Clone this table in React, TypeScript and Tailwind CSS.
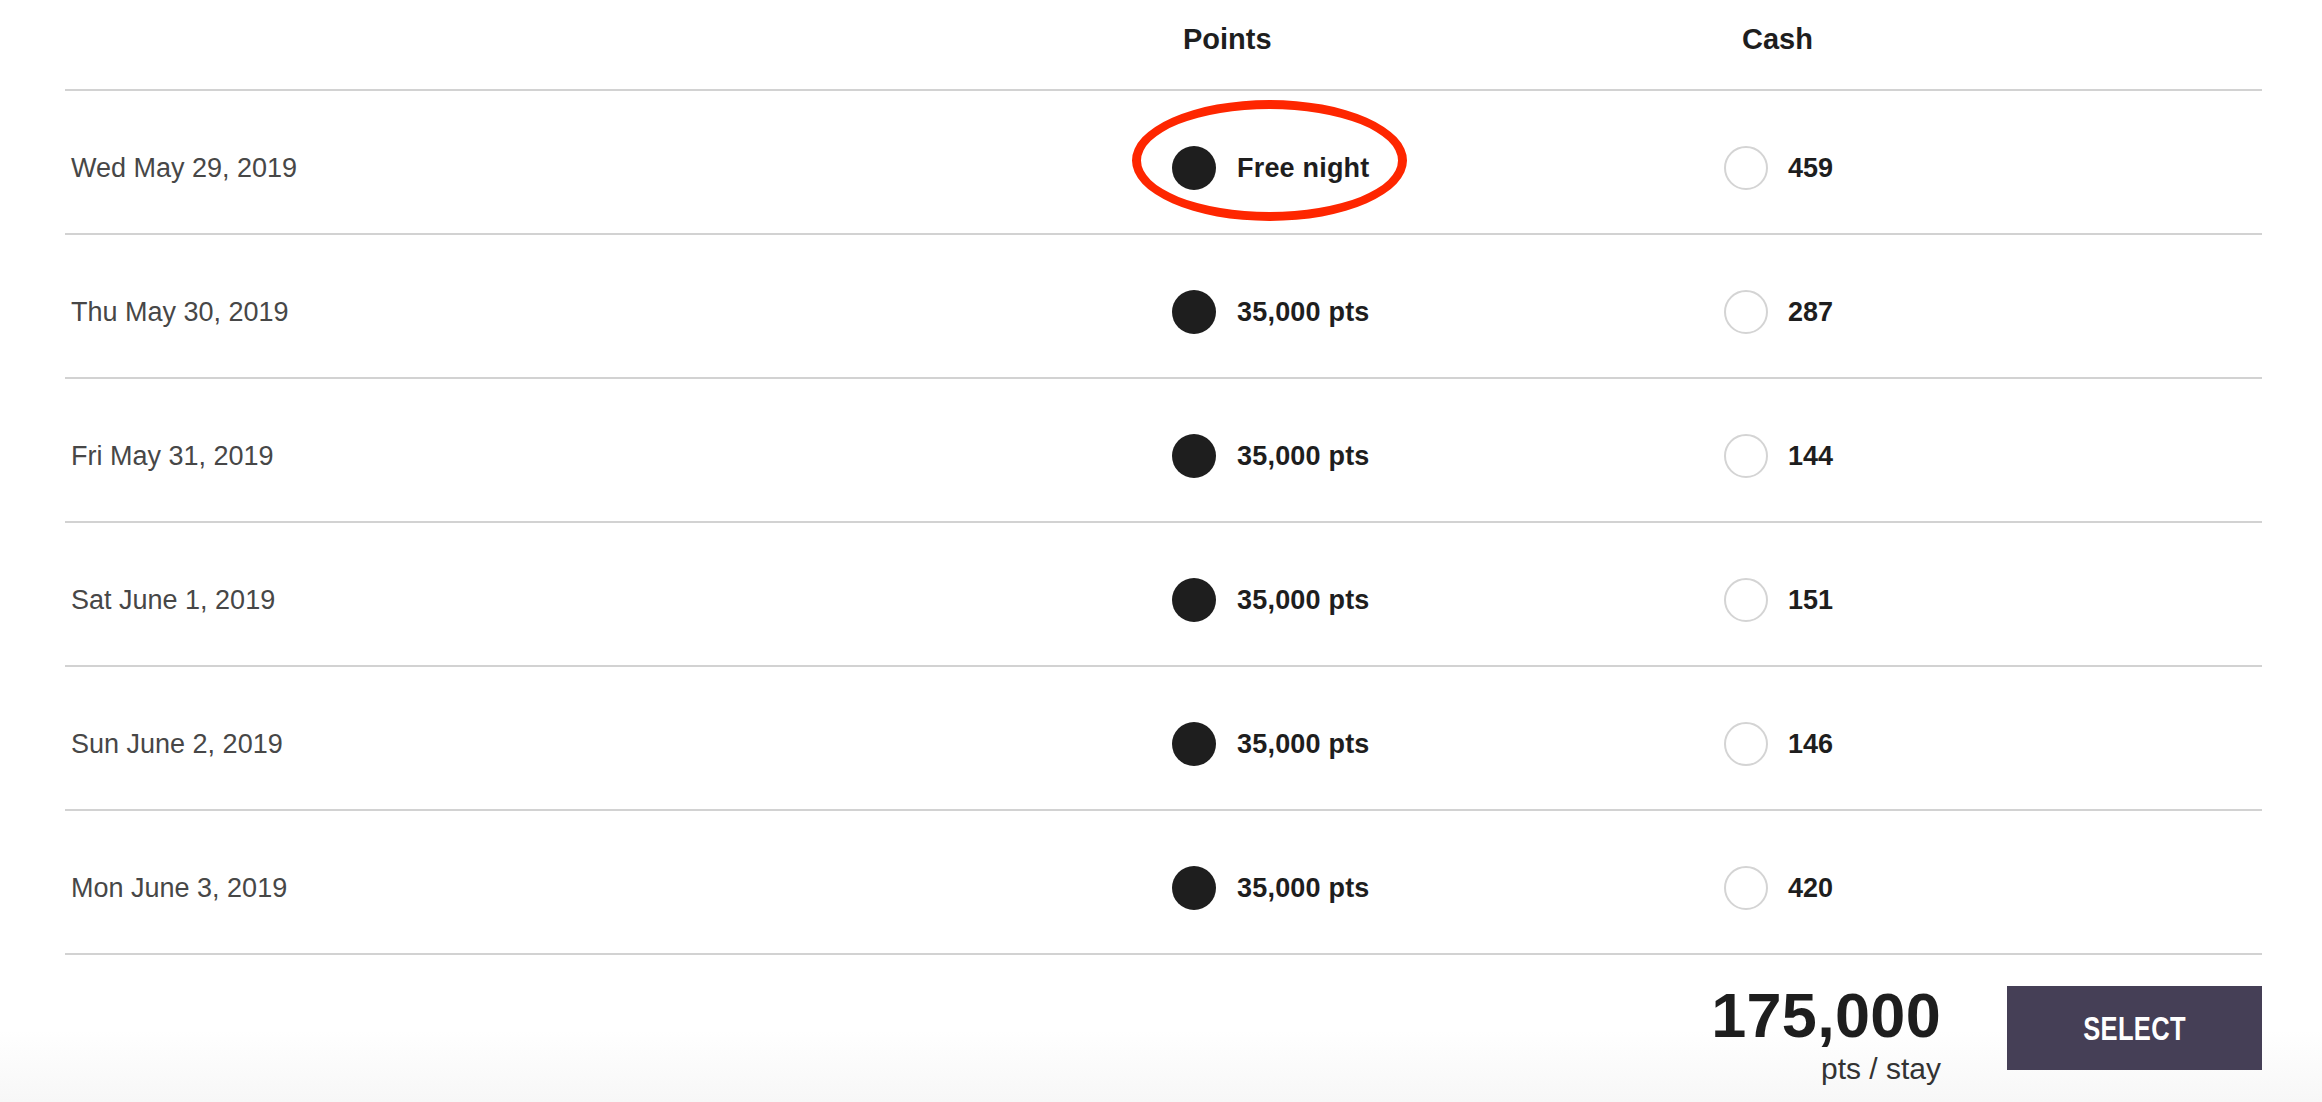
type Night = {
  date: string;
  points: string;
  cash: number;
  highlight?: boolean;
};

const nights: Night[] = [
  { date: "Wed May 29, 2019", points: "Free night", cash: 459, highlight: true },
  { date: "Thu May 30, 2019", points: "35,000 pts", cash: 287 },
  { date: "Fri May 31, 2019", points: "35,000 pts", cash: 144 },
  { date: "Sat June 1, 2019", points: "35,000 pts", cash: 151 },
  { date: "Sun June 2, 2019", points: "35,000 pts", cash: 146 },
  { date: "Mon June 3, 2019", points: "35,000 pts", cash: 420 },
];

function NightRow({ night }: { night: Night }) {
  return (
    <div className="grid h-[144px] grid-cols-[1107px_552px_1fr] items-center border-b-2 border-[#d2d2d2] pt-[12px]">
      <p className="pl-[6px] text-[27px] text-[#474747]">{night.date}</p>

      <div className="relative flex items-center gap-[21px]">
        <span className="h-[44px] w-[44px] shrink-0 rounded-full bg-[#1e1e1e]" />
        <span className="text-[27px] font-bold tracking-[0.2px] text-[#1e1e1e]">{night.points}</span>
        {night.highlight && (
          <span className="pointer-events-none absolute left-[-40px] top-[-46px] h-[121px] w-[275px] rounded-[50%] border-[9px] border-[#fe2600]" />
        )}
      </div>

      <div className="flex items-center gap-[20px]">
        <span className="h-[44px] w-[44px] shrink-0 rounded-full border-2 border-[#d4d4d4] bg-white" />
        <span className="text-[27px] font-bold text-[#1e1e1e]">{night.cash}</span>
      </div>
    </div>
  );
}

export default function App() {
  return (
    <div className="min-h-[1102px] bg-[linear-gradient(to_bottom,#ffffff_0px,#ffffff_1030px,#f7f7f7_1102px)] font-['Liberation_Sans',Arial,sans-serif]">
      <div className="ml-[65px] mr-[60px]">
        <div className="grid h-[91px] grid-cols-[1107px_552px_1fr] border-b-2 border-[#d2d2d2] pt-[18px]">
          <div />
          <p className="pl-[11px] text-[29px] font-bold text-[#1e1e1e]">Points</p>
          <p className="pl-[18px] text-[29px] font-bold text-[#1e1e1e]">Cash</p>
        </div>

        {nights.map((n) => (
          <NightRow key={n.date} night={n} />
        ))}

        <div className="flex items-start justify-end gap-[66px] pt-[29px]">
          <div className="text-right">
            <p className="text-[63px] font-bold leading-none tracking-[0.3px] text-[#1e1e1e]">175,000</p>
            <p className="mt-[7px] text-[30px] leading-none text-[#333333]">pts / stay</p>
          </div>
          <button className="mt-[2px] flex h-[84px] w-[255px] items-center justify-center bg-[#453f56] text-white">
            <span className="inline-block scale-x-[0.75] text-[34px] font-bold leading-none tracking-[0.5px]">
              SELECT
            </span>
          </button>
        </div>
      </div>
    </div>
  );
}
